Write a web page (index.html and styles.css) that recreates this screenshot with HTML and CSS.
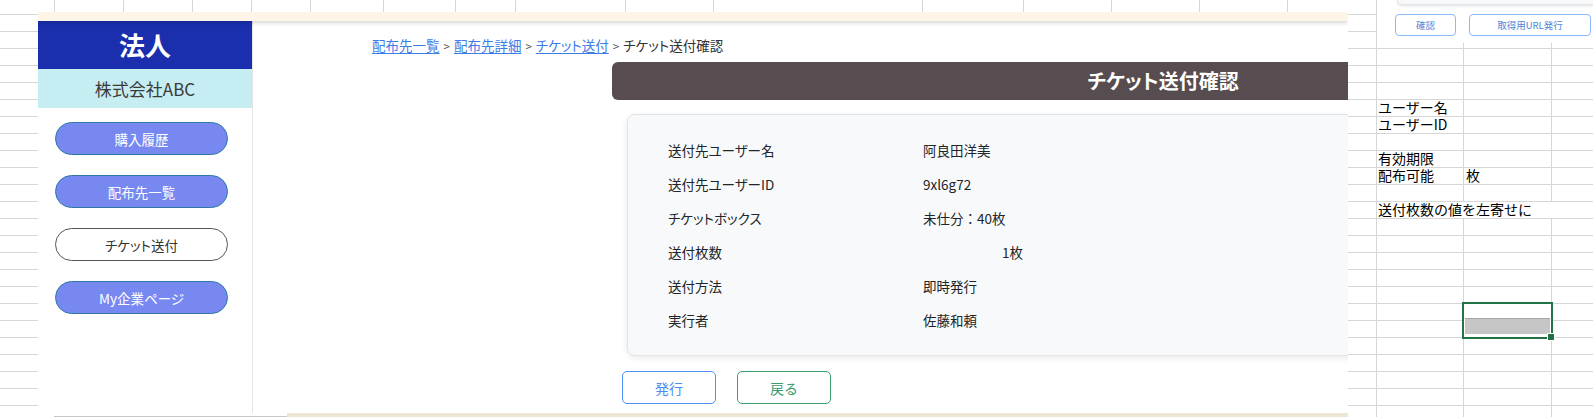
FILE: index.html
```html
<!DOCTYPE html>
<html lang="ja">
<head>
<meta charset="utf-8">
<title>チケット送付確認</title>
<link rel="stylesheet" href="styles.css">
</head>
<body>
<div class="screen">
  <div class="left-part">
    <div class="colstrip">
      <span></span><span></span><span></span><span></span><span></span><span></span><span></span><span></span>
      <span></span><span></span><span></span><span></span><span></span><span></span><span></span><span></span>
    </div>
    <div class="below">
      <div class="gutter"></div>
      <div class="window">
        <div class="win-top"></div>
        <div class="win-body">
          <aside class="sidebar">
            <div class="side-head">法人</div>
            <div class="side-company">株式会社ABC</div>
            <nav class="side-nav">
              <a class="side-btn">購入履歴</a>
              <a class="side-btn">配布先一覧</a>
              <a class="side-btn active">チケット送付</a>
              <a class="side-btn">My企業ページ</a>
            </nav>
          </aside>
          <main class="main">
            <div class="crumbs">
              <a class="crumb-link">配布先一覧</a><span class="sep">&gt;</span><a class="crumb-link">配布先詳細</a><span class="sep">&gt;</span><a class="crumb-link">チケット送付</a><span class="sep">&gt;</span><span class="crumb-current">チケット送付確認</span>
            </div>
            <h1 class="title-bar">チケット送付確認</h1>
            <section class="card">
              <div class="row"><span class="label">送付先ユーザー名</span><span class="value">阿良田洋美</span></div>
              <div class="row"><span class="label">送付先ユーザーID</span><span class="value">9xl6g72</span></div>
              <div class="row"><span class="label">チケットボックス</span><span class="value">未仕分：40枚</span></div>
              <div class="row"><span class="label">送付枚数</span><span class="value num">1枚</span></div>
              <div class="row"><span class="label">送付方法</span><span class="value">即時発行</span></div>
              <div class="row"><span class="label">実行者</span><span class="value">佐藤和頼</span></div>
            </section>
            <div class="actions">
              <button class="btn btn-issue">発行</button>
              <button class="btn btn-back">戻る</button>
            </div>
          </main>
        </div>
        <div class="win-foot"><span class="f1"></span><span class="f2"></span><span class="f3"></span></div>
      </div>
    </div>
  </div>
  <div class="xl">
    <div class="xl-a"></div>
    <div class="xl-rest">
      <div class="xl-top">
        <div class="mini-card"></div>
        <div class="mini-btns">
          <button class="mini-btn mb-confirm">確認</button>
          <button class="mini-btn mb-url">取得用URL発行</button>
        </div>
      </div>
      <div class="xl-grid">
        <span class="cell r5 c1">ユーザー名</span>
        <span class="cell r6 c1">ユーザーID</span>
        <span class="cell r8 c1">有効期限</span>
        <span class="cell r9 c1">配布可能</span>
        <span class="cell r9 c2">枚</span>
        <span class="cell r11 wide">送付枚数の値を左寄せに</span>
        <div class="sel"><div class="sel-fill"></div><span class="sel-handle"></span></div>
      </div>
    </div>
  </div>
</div>
</body>
</html>
```

FILE: styles.css
```css
* { box-sizing: border-box; }

html, body {
  margin: 0;
  padding: 0;
  width: 1593px;
  height: 417px;
  overflow: hidden;
  background: #fff;
}

body {
  font-family: "Noto Sans CJK JP", "Noto Sans", sans-serif;
}

.screen {
  display: flex;
  height: 417px;
}

/* ---------- left part: column strip + window ---------- */
.left-part {
  width: 1348px;
  flex-shrink: 0;
  display: flex;
  flex-direction: column;
}

.colstrip {
  height: 12px;
  flex-shrink: 0;
  display: grid;
  grid-template-columns: 55px 69px 69px 59px 59px 73px 72px 60px 110px 88px 209px 101px 88px 88px 88px 1fr;
}
.colstrip span {
  border-right: 1px solid #d6d6d6;
}
.colstrip span:last-child { border-right: 0; }

.below {
  flex: 1;
  display: flex;
  min-height: 0;
}
.gutter {
  width: 38px;
  flex-shrink: 0;
  background: repeating-linear-gradient(to bottom, transparent 0 2px, #d6d6d6 2px 3px, transparent 3px 17px);
}

.window {
  width: 1310px;
  height: 405px;
  background: #fff;
  display: flex;
  flex-direction: column;
  overflow: hidden;
}

.win-top {
  height: 9px;
  flex-shrink: 0;
  background: #fdf6e8;
  box-shadow: 0 2px 4px rgba(0, 0, 0, 0.16);
  position: relative;
  z-index: 2;
}

.win-body {
  flex: 1;
  display: flex;
  min-height: 0;
}

/* ---------- sidebar ---------- */
.sidebar {
  width: 215px;
  flex-shrink: 0;
  border-right: 1px solid #e4e4e4;
  display: flex;
  flex-direction: column;
}
.side-head {
  height: 48px;
  background: #1a2eae;
  color: #fff;
  font-weight: 700;
  font-size: 26px;
  line-height: 48px;
  text-align: center;
}
.side-company {
  height: 39px;
  background: #c6edf1;
  color: #3a3a3a;
  font-size: 17px;
  line-height: 39px;
  text-align: center;
}
.side-nav {
  display: flex;
  flex-direction: column;
  gap: 20px;
  padding: 14px 0 0 17px;
}
.side-btn {
  width: 173px;
  height: 33px;
  border-radius: 17px;
  background: #7789f1;
  border: 1px solid #2f78a8;
  color: #fff;
  font-size: 13.5px;
  font-feature-settings: "palt";
  display: flex;
  align-items: center;
  justify-content: center;
}
.side-btn.active {
  background: #fff;
  border-color: #555;
  color: #333;
}

/* ---------- main ---------- */
.main {
  flex: 1;
  min-width: 0;
  overflow: hidden;
  padding-top: 14px;
}

.crumbs {
  padding-left: 119px;
  font-size: 13.5px;
  line-height: 20px;
  height: 20px;
  white-space: nowrap;
  color: #333;
  font-feature-settings: "palt";
}
.crumb-link {
  color: #3b7ce6;
  text-decoration: underline;
  text-underline-offset: 2px;
}
.sep {
  color: #555;
  font-size: 11.5px;
  margin: 0 4px;
}
.crumb-current { color: #333; }

.title-bar {
  margin: 7px 0 0 359px;
  width: 1102px;
  height: 38px;
  background: #574c4f;
  border-radius: 6px;
  color: #fff;
  font-size: 20px;
  font-weight: 700;
  line-height: 38px;
  text-align: center;
  font-feature-settings: "palt";
}

.card {
  margin: 14px 0 0 374px;
  width: 1080px;
  height: 242px;
  background: #f8f9fa;
  border: 1px solid #e2e4e7;
  border-radius: 8px;
  box-shadow: 0 2px 6px rgba(0, 0, 0, 0.09);
  padding: 18px 0 18px 40px;
}
.row {
  height: 34px;
  display: grid;
  grid-template-columns: 255px 1fr;
  align-items: center;
  font-size: 13.5px;
  color: #212529;
}
.label { font-feature-settings: "palt"; }
.num { padding-left: 79px; }

.actions {
  margin: 15px 0 0 369px;
  display: flex;
  gap: 21px;
}
.btn {
  width: 94px;
  height: 33px;
  background: #fff;
  border-radius: 5px;
  font-family: "Noto Sans CJK JP", "Noto Sans", sans-serif;
  font-size: 14px;
  padding: 0;
}
.btn-issue {
  border: 1px solid #4a90f7;
  color: #4a8cf0;
}
.btn-back {
  border: 1px solid #3a9d6e;
  color: #3c9a6b;
}

.win-foot {
  height: 4px;
  flex-shrink: 0;
  display: flex;
}
.win-foot .f1 { width: 16px; }
.win-foot .f2 { width: 233px; border-bottom: 1px solid #c8c8c8; }
.win-foot .f3 { flex: 1; background: #ede6d4; }

/* ---------- excel panel on the right ---------- */
.xl {
  width: 245px;
  flex-shrink: 0;
  display: flex;
  overflow: hidden;
}
.xl-a {
  width: 29px;
  flex-shrink: 0;
  border-right: 1px solid #d6d6d6;
  background: repeating-linear-gradient(to bottom, transparent 0 14px, #d6d6d6 14px 15px, transparent 15px 17px);
}
.xl-rest {
  width: 216px;
  flex-shrink: 0;
  display: flex;
  flex-direction: column;
}
.xl-top {
  height: 43px;
  flex-shrink: 0;
  background: #fff;
  overflow: hidden;
}
.mini-card {
  margin-left: 20px;
  width: 300px;
  height: 5px;
  background: #f8f9fa;
  border: 1px solid #e2e5e9;
  border-top: 0;
  border-radius: 0 0 8px 8px;
  box-shadow: 0 1px 3px rgba(0, 0, 0, 0.12);
}
.mini-btns {
  display: flex;
  gap: 13px;
  margin-top: 9px;
  padding-left: 18px;
}
.mini-btn {
  height: 22px;
  background: #fff;
  border: 1px solid #8ab8fb;
  border-radius: 4px;
  color: #4f86d6;
  font-family: "Noto Sans CJK JP", "Noto Sans", sans-serif;
  font-size: 9.5px;
  padding: 0;
}
.mb-confirm { width: 61px; }
.mb-url { width: 122px; }

.xl-grid {
  flex: 1;
  min-height: 0;
  overflow: hidden;
  display: grid;
  grid-template-columns: 87px 88px 41px;
  grid-template-rows: 5px repeat(22, 17px);
  background:
    linear-gradient(to right,
      transparent 0 86px, #d6d6d6 86px 87px,
      transparent 87px 174px, #d6d6d6 174px 175px,
      transparent 175px),
    repeating-linear-gradient(to bottom, transparent 0 5px, #d6d6d6 5px 6px, transparent 6px 17px);
  font-size: 14px;
  color: #000;
}
.cell {
  line-height: 17px;
  padding-left: 1px;
  white-space: nowrap;
}
.c1 { grid-column: 1; }
.c2 { grid-column: 2; padding-left: 2px; }
.r5 { grid-row: 5; }
.r6 { grid-row: 6; }
.r8 { grid-row: 8; }
.r9 { grid-row: 9; }
.r11 { grid-row: 11; }
.wide {
  grid-column: 1 / 3;
  background: #fff;
  border-top: 1px solid #d6d6d6;
  line-height: 15px;
}

.sel {
  grid-column: 2;
  grid-row: 17 / 19;
  margin: -1px -1px -2px -2px;
  border: 2px solid #217346;
  background: #fff;
  position: relative;
}
.sel-fill {
  margin: 14px 1px 0 1px;
  height: 16px;
  background: #c6c6c6;
  border-top: 1px solid #a6a6a6;
}
.sel-handle {
  position: absolute;
  right: -4px;
  bottom: -4px;
  width: 6px;
  height: 6px;
  background: #217346;
  border: 1px solid #fff;
  box-sizing: content-box;
}
```
